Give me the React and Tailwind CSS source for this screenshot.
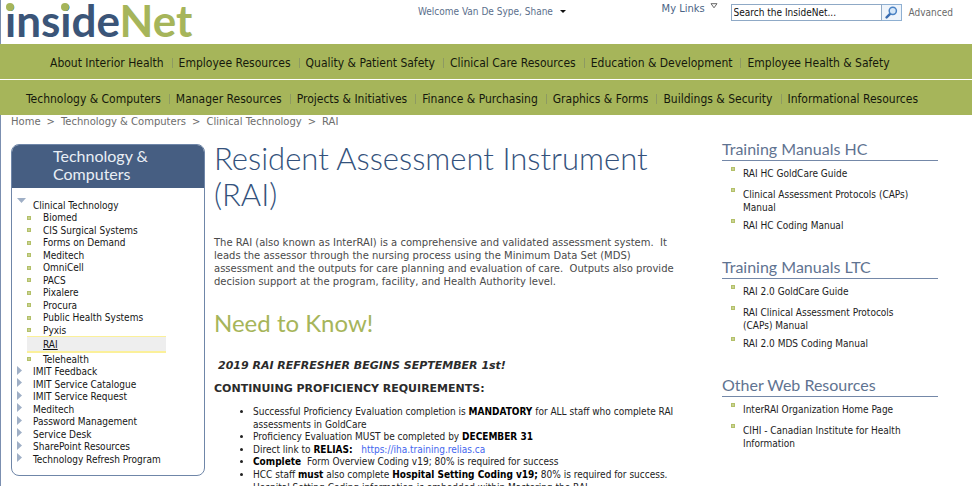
import React from "react";

const TAHOMA = "font-['DejaVu_Sans_Condensed','DejaVu_Sans',sans-serif]";
const VERDANA = "font-['DejaVu_Sans',sans-serif]";
const GOTHIC = "font-[Lato,sans-serif]";

const primaryNav = [
  "About Interior Health",
  "Employee Resources",
  "Quality & Patient Safety",
  "Clinical Care Resources",
  "Education & Development",
  "Employee Health & Safety",
];
const secondaryNav = [
  "Technology & Computers",
  "Manager Resources",
  "Projects & Initiatives",
  "Finance & Purchasing",
  "Graphics & Forms",
  "Buildings & Security",
  "Informational Resources",
];
const crumbs = ["Home", "Technology & Computers", "Clinical Technology", "RAI"];
const clinical = [
  "Biomed",
  "CIS Surgical Systems",
  "Forms on Demand",
  "Meditech",
  "OmniCell",
  "PACS",
  "Pixalere",
  "Procura",
  "Public Health Systems",
  "Pyxis",
];
const sections = [
  "IMIT Feedback",
  "IMIT Service Catalogue",
  "IMIT Service Request",
  "Meditech",
  "Password Management",
  "Service Desk",
  "SharePoint Resources",
  "Technology Refresh Program",
];
const resources = [
  {
    title: "Training Manuals HC",
    links: ["RAI HC GoldCare Guide", "Clinical Assessment Protocols (CAPs) Manual", "RAI HC Coding Manual"],
  },
  {
    title: "Training Manuals LTC",
    links: ["RAI 2.0 GoldCare Guide", "RAI Clinical Assessment Protocols (CAPs) Manual", "RAI 2.0 MDS Coding Manual"],
  },
  {
    title: "Other Web Resources",
    links: ["InterRAI Organization Home Page", "CIHI - Canadian Institute for Health Information"],
  },
];

function Bullet() {
  return (
    <svg className="size-1 shrink-0" viewBox="0 0 4 4" aria-hidden="true">
      <rect width="4" height="4" fill="#b3c069" />
      <rect x="1" y="1" width="2" height="2" fill="#c8d292" />
    </svg>
  );
}

function NavRow({ items, label, className }) {
  return (
    <nav aria-label={label} className={`bg-[#a6b55a] ${className}`}>
      <ul className="flex items-center whitespace-nowrap">
        {items.map((item, i) => (
          <li key={item} className="flex items-center">
            {i > 0 && <span className="mr-[6px] ml-2 h-[10px] w-px bg-[#8d9a62]" />}
            <a href="#" className="text-[12px] leading-[16px] text-[#15180c]">
              {item}
            </a>
          </li>
        ))}
      </ul>
    </nav>
  );
}

function Header() {
  return (
    <header className="flex h-11 border-l border-[#7b8fb0]">
      <a href="#" className={`relative block w-[417px] pl-1 text-[44px] leading-[40px] font-bold text-[#3b5578] ${GOTHIC}`}>
        inside<span className="text-[#a6b55a]">Net</span>
        <span className="absolute top-[3px] left-[5px] size-2 rounded-full bg-[#a6b55a]" />
        <span className="absolute top-[3px] left-[60px] size-2 rounded-full bg-[#a6b55a]" />
      </a>
      <button type="button" className="flex h-[22px] items-center gap-[7px] text-[10px] text-[#5b6f8c]">
        Welcome Van De Sype, Shane
        <svg className="h-[3px] w-[6px]" viewBox="0 0 6 3" aria-hidden="true">
          <path d="M0 0h6L3 3z" fill="#111" />
        </svg>
      </button>
      <div className="ml-auto flex pr-[19px]">
        <button type="button" className="mr-[13px] flex h-[18px] items-center gap-[5px] text-[11px] text-[#4a6485]">
          My Links
          <svg className="mb-[6px] h-[6px] w-[8px]" viewBox="0 0 8 6" aria-hidden="true">
            <path d="M1 .7h6L4 4.8z" fill="#fff" stroke="#666" />
          </svg>
        </button>
        <form className="mt-1 flex h-[17px]">
          <input
            aria-label="Search"
            defaultValue="Search the InsideNet..."
            className="w-[151px] border border-[#8fa9c6] bg-white px-[2px] text-[10px] text-[#111]"
          />
          <button type="submit" aria-label="Go" className="flex w-5 items-center justify-center border border-l-0 border-[#8fb0d2] bg-[#eef4fb]">
            <svg className="size-[13px]" viewBox="0 0 13 13" aria-hidden="true">
              <path d="M5.6 7.4L1.6 11.4" stroke="#3a6cb0" strokeWidth="2.4" strokeLinecap="round" />
              <circle cx="7.8" cy="4.8" r="3.6" fill="#d4e6f8" stroke="#4a82c4" strokeWidth="1.5" />
            </svg>
          </button>
        </form>
        <a href="#" className="ml-[7px] h-[24px] text-[10px] leading-[25px] text-[#6a6a6a]">
          Advanced
        </a>
      </div>
    </header>
  );
}

function Sidebar() {
  return (
    <aside className="w-[194px] shrink-0 self-start overflow-hidden rounded-[8px] border border-[#6f86a8] bg-white pb-[10px] text-[10px] text-[#151515]">
      <h2 className={`h-[43px] bg-[#465e82] pt-[2px] pl-[41px] text-[16px] leading-[18px] text-[#e9eef5] ${GOTHIC}`}>
        Technology &amp;
        <br />
        Computers
      </h2>
      <div className="pt-[11px]">
        <div className="flex h-[12px] items-center pl-[5px]">
          <svg className="mr-[7px] mb-[10px] h-[5px] w-[9px]" viewBox="0 0 9 5" aria-hidden="true">
            <path d="M0 0h9L4.500 5z" fill="#9fafc6" />
          </svg>
          <a href="#">Clinical Technology</a>
        </div>
        <ul>
          {clinical.map((item) => (
            <li key={item} className="flex h-[13px] items-center gap-3 pl-[15px] even:h-[12px]">
              <Bullet />
              <a href="#">{item}</a>
            </li>
          ))}
          <li className="ml-[15px] flex h-[17px] w-[139px] items-center border-t border-b-2 border-[#fbf09a] bg-[#eeeeee] pl-4">
            <a href="#" aria-current="page" className="underline">
              RAI
            </a>
          </li>
          <li className="flex h-[12px] items-center gap-3 pl-[15px]">
            <Bullet />
            <a href="#">Telehealth</a>
          </li>
        </ul>
        <ul>
          {sections.map((item) => (
            <li key={item} className="flex h-[13px] items-center gap-[11px] pl-[5px] even:h-[12px]">
              <svg className="mb-[3px] h-[9px] w-[5px]" viewBox="0 0 5 9" aria-hidden="true">
                <path d="M0 0v9l5-4.500z" fill="#9fafc6" />
              </svg>
              <a href="#">{item}</a>
            </li>
          ))}
        </ul>
      </div>
    </aside>
  );
}

function Article() {
  return (
    <main className="-mt-1 w-[492px] shrink-0 text-[#4a4a4a]">
      <h1 className={`text-[31px] leading-[36px] font-light text-[#34527c] ${GOTHIC}`}>Resident Assessment Instrument (RAI)</h1>
      <p className={`mt-6 text-[10px] leading-[13px] ${VERDANA}`}>
        The RAI (also known as InterRAI) is a comprehensive and validated assessment system.&nbsp; It
        <br />
        leads the assessor through the nursing process using the Minimum Data Set (MDS)
        <br />
        assessment and the outputs for care planning and evaluation of care.&nbsp; Outputs also provide
        <br />
        decision support at the program, facility, and Health Authority level.
      </p>
      <h2 className={`mt-5 text-[24px] leading-[30px] text-[#a6b55a] ${GOTHIC}`}>Need to Know!</h2>
      <p className={`mt-[21px] pl-1 text-[11px] leading-[13px] font-bold text-[#2b2b2b] italic ${VERDANA}`}>
        2019 RAI REFRESHER BEGINS SEPTEMBER 1st!
      </p>
      <h3 className={`mt-[10px] text-[11px] leading-[13px] font-bold text-[#2b2b2b] ${VERDANA}`}>
        CONTINUING PROFICIENCY REQUIREMENTS:
      </h3>
      <ul className="mt-[10px] list-disc pl-[39px] text-[10px] text-[#222] [&_b]:text-black [&>li]:leading-[13px] [&>li:nth-child(even)]:leading-[12px]">
        <li>
          Successful Proficiency Evaluation completion is <b>MANDATORY</b> for ALL staff who complete RAI
          <br />
          assessments in GoldCare
        </li>
        <li>
          Proficiency Evaluation MUST be completed by <b>DECEMBER 31</b>
        </li>
        <li>
          Direct link to <b>RELIAS:</b>&nbsp;&nbsp;{" "}
          <a href="https://iha.training.relias.ca" className="text-[#4466ee]">
            https://iha.training.relias.ca
          </a>
        </li>
        <li>
          <b>Complete</b>&nbsp; Form Overview Coding v19; 80% is required for success
        </li>
        <li>
          HCC staff <b>must</b> also complete <b>Hospital Setting Coding v19;</b> 80% is required for success.
          <br />
          Hospital Setting Coding information is embedded within Mastering the RAI
        </li>
      </ul>
    </main>
  );
}

function Resources() {
  return (
    <aside className="-mt-[3px] w-[216px] text-[10px] leading-[13px] text-[#1c1c1c]">
      {resources.map((group) => (
        <section key={group.title} className="mb-[27px]">
          <h2 className={`border-b border-[#7488a8] pb-[3px] text-[16px] leading-[16px] text-[#5f7391] ${GOTHIC}`}>{group.title}</h2>
          <ul className="flex flex-col gap-[5px] pt-[6px] pl-[9px]">
            {group.links.map((link) => (
              <li key={link} className="flex gap-2 pr-5 first:mb-[3px]">
                <Bullet />
                <a href="#">{link}</a>
              </li>
            ))}
          </ul>
        </section>
      ))}
    </aside>
  );
}

export default function App() {
  return (
    <div className={`h-screen overflow-hidden bg-white ${TAHOMA}`}>
      <Header />
      <NavRow items={primaryNav} label="Primary" className="h-[35px] pt-[11px] pl-[50px]" />
      <NavRow items={secondaryNav} label="Secondary" className="mt-px h-[35px] pt-[11px] pl-[26px]" />
      <div className="h-full border-l border-[#7b8fb0]">
        <nav aria-label="Breadcrumb" className={`pl-[10px] text-[10px] leading-[13px] text-[#6d6d6d] ${VERDANA}`}>
          <ol className="flex gap-[6px]">
            {crumbs.map((crumb, i) => (
              <li key={crumb} className="flex gap-[6px]">
                {i > 0 && <span>&gt;</span>}
                <a href="#">{crumb}</a>
              </li>
            ))}
          </ol>
        </nav>
        <div className="flex pt-4 pl-[10px]">
          <Sidebar />
          <div className="flex gap-4 pl-[9px]">
            <Article />
            <Resources />
          </div>
        </div>
      </div>
    </div>
  );
}
